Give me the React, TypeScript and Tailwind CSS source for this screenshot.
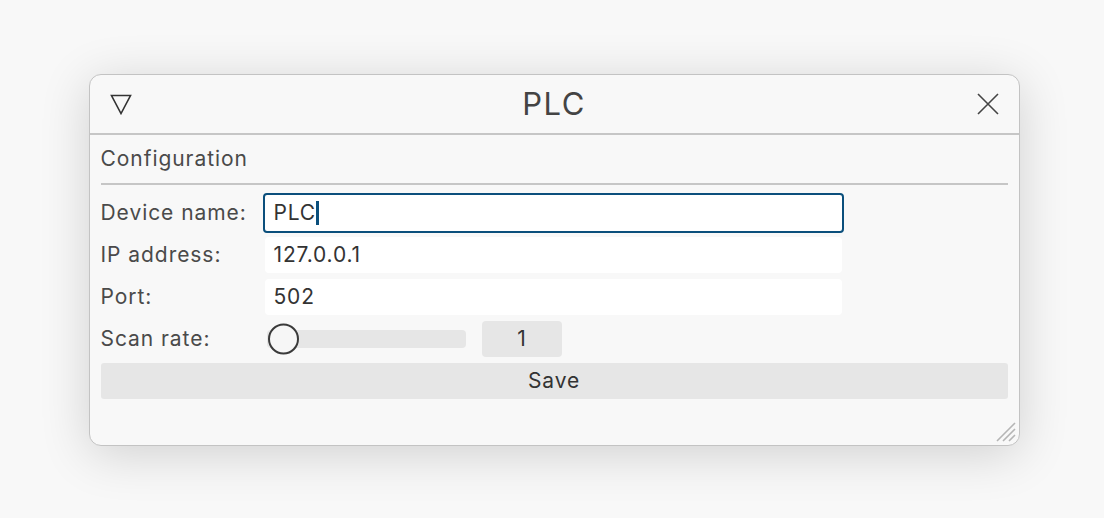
import React from "react";

const font = { fontFamily: "Inter, 'Noto Sans', sans-serif" };

function Field({ label, value, focused }: { label: string; value: string; focused?: boolean }) {
  return (
    <div className="flex h-[36px] items-center">
      <div className="w-[164px] text-[21px] tracking-[0.045em] text-[#4a4a4a]">{label}</div>
      {focused ? (
        <div className="relative -mx-[2px] flex h-[40px] w-[581px] items-center rounded-[4px] border-2 border-[#0b4f7c] bg-white px-[9px] text-[21px] tracking-[0.04em] text-[#333]">
          PLC
          <span className="inline-block h-[24px] w-[3px] bg-[#0b4f7c]" />
        </div>
      ) : (
        <div className="flex h-[36px] w-[577px] items-center rounded-[4px] bg-white px-[9px] text-[21px] tracking-[0.04em] text-[#333]">
          {value}
        </div>
      )}
    </div>
  );
}

export default function App() {
  return (
    <div className="flex h-screen w-full items-center justify-center bg-[#f8f8f8] pl-[4px] pt-[2px]" style={font}>
      <div className="flex h-[372px] w-[931px] flex-col rounded-[12px] border border-[#c3c3c3] bg-[#f8f8f8] shadow-[0_8px_50px_rgba(0,0,0,0.16)]">
        {/* Title bar */}
        <div className="flex h-[60px] items-center justify-between border-b-2 border-[#c6c6c6] px-[20px]">
          <svg width="22" height="22" viewBox="0 0 22 22" className="text-[#333]">
            <path d="M1.5 2.5 L20.5 2.5 L11 20.5 Z" fill="none" stroke="currentColor" strokeWidth="1.6" strokeLinejoin="miter" />
          </svg>
          <div className="text-[31px] tracking-[0.05em] text-[#444]">PLC</div>
          <svg width="22" height="22" viewBox="0 0 22 22" className="text-[#444]">
            <path d="M1 1 L21 21 M21 1 L1 21" stroke="currentColor" strokeWidth="1.6" />
          </svg>
        </div>

        {/* Content */}
        <div className="relative flex flex-1 flex-col px-[11px]">
          <div className="flex h-[50px] items-center border-b-2 border-[#c6c6c6] text-[21px] tracking-[0.045em] text-[#4a4a4a]">
            Configuration
          </div>
          <div className="mt-[10px] flex flex-col gap-[6px]">
            <Field label="Device name:" value="PLC" focused />
            <Field label="IP address:" value="127.0.0.1" />
            <Field label="Port:" value="502" />
            <div className="flex h-[36px] items-center">
              <div className="w-[164px] text-[21px] tracking-[0.045em] text-[#4a4a4a]">Scan rate:</div>
              <div className="relative ml-[2px] h-[18px] w-[199px] rounded-[4px] bg-[#e6e6e6]">
                <div className="absolute left-[1px] top-1/2 h-[31px] w-[31px] -translate-y-1/2 rounded-full border-2 border-[#3a3a3a] bg-[#f6f6f6]" />
              </div>
              <div className="ml-[16px] flex h-[36px] w-[80px] items-center justify-center rounded-[4px] bg-[#e6e6e6] text-[21px] text-[#333]">
                1
              </div>
            </div>
            <div className="flex h-[36px] items-center justify-center rounded-[3px] bg-[#e6e6e6] text-[21px] tracking-[0.04em] text-[#333]">
              Save
            </div>
          </div>
          {/* Resize grip */}
          <svg width="22" height="22" viewBox="0 0 22 22" className="absolute bottom-[3px] right-[3px] text-[#b5b5b5]">
            <path d="M3 21 L21 3 M9 21 L21 9 M15 21 L21 15" stroke="currentColor" strokeWidth="1.6" />
          </svg>
        </div>
      </div>
    </div>
  );
}
